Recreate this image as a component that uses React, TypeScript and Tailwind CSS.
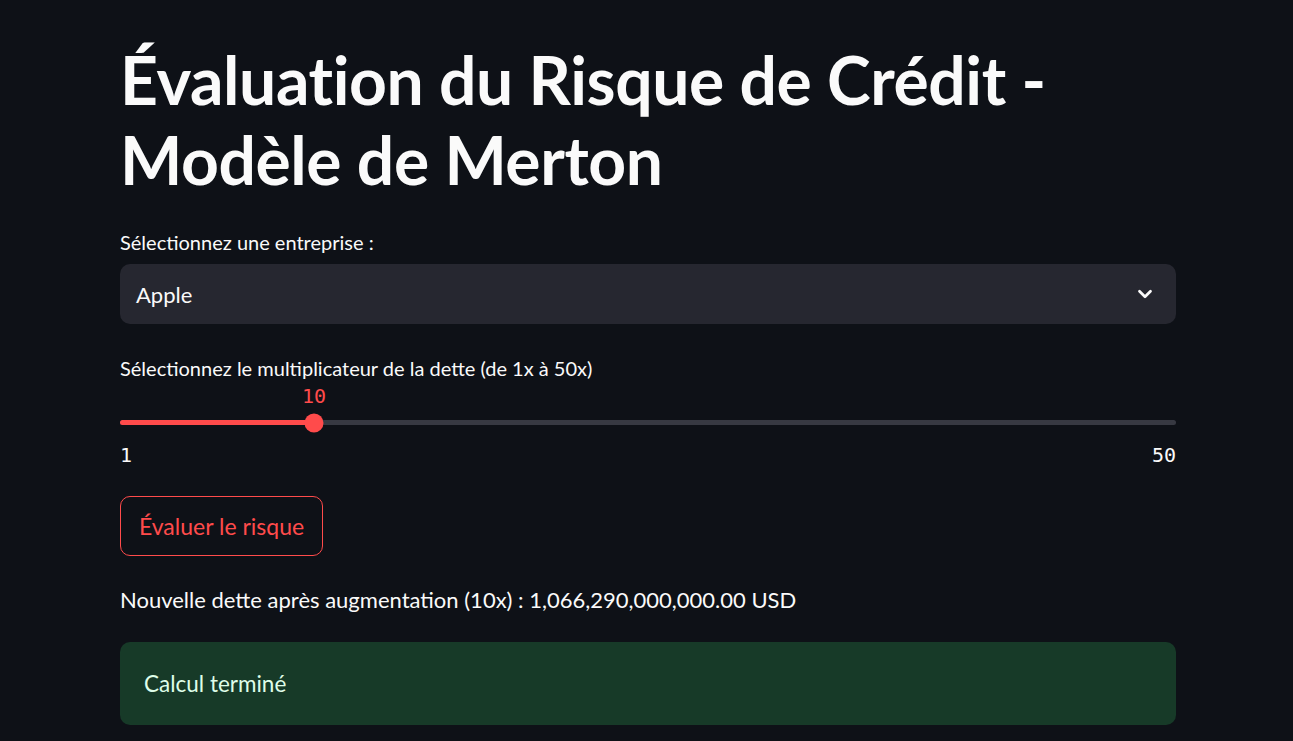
import { ChevronDown } from 'lucide-react';

const App = () => {
  const value = 10;
  const pct = ((value - 1) / (50 - 1)) * 100;

  return (
    <div className="min-h-[741px] bg-[#0e1117] text-[#fafafa] font-['Lato','Noto_Sans',sans-serif]">
      <main className="ml-[120px] w-[1056px] pt-[40px]">
        {/* Title */}
        <h1 className="text-[66px] font-bold leading-[80px] tracking-[-0.4px]">
          Évaluation du Risque de Crédit - Modèle de Merton
        </h1>

        {/* Company select */}
        <div className="mt-[28px]">
          <label className="block text-[20px] leading-[28px] mb-[8px]">Sélectionnez une entreprise :</label>
          <div className="flex h-[60px] items-center justify-between rounded-[10px] bg-[#262730] pl-[16px] pr-[20px]">
            <span className="text-[22px]">Apple</span>
            <ChevronDown className="h-[22px] w-[22px]" strokeWidth={3} />
          </div>
        </div>

        {/* Debt multiplier slider */}
        <div className="mt-[30px]">
          <label className="block text-[20px] leading-[28px]">
            Sélectionnez le multiplicateur de la dette (de 1x à 50x)
          </label>
          <div className="relative mt-[38px] h-[5px] rounded-full bg-[#373942]">
            <div className="h-full rounded-full bg-[#ff4b4b]" style={{ width: `${pct}%` }} />
            <div
              className="absolute top-1/2 h-[19px] w-[19px] -translate-x-1/2 -translate-y-1/2 rounded-full bg-[#ff4b4b]"
              style={{ left: `${pct}%` }}
            />
            <span
              className="absolute -top-[36px] -translate-x-1/2 font-['DejaVu_Sans_Mono',monospace] text-[20px] leading-[24px] text-[#ff4b4b]"
              style={{ left: `${pct}%` }}
            >
              {value}
            </span>
          </div>
          <div className="mt-[16px] flex justify-between font-['DejaVu_Sans_Mono',monospace] text-[20px] leading-[28px]">
            <span>1</span>
            <span>50</span>
          </div>
        </div>

        {/* Evaluate button */}
        <button className="mt-[27px] flex h-[60px] items-center rounded-[10px] border border-[#ff4b4b] bg-[#0e1117] px-[18px] text-[23px] text-[#ff4b4b]">
          Évaluer le risque
        </button>

        <p className="mt-[30px] text-[22px] leading-[28px]">
          Nouvelle dette après augmentation (10x) : 1,066,290,000,000.00 USD
        </p>

        <div className="mt-[28px] flex h-[83px] items-center rounded-[10px] bg-[#173a28] px-[24px] text-[22.5px] text-[#dffde9]">
          Calcul terminé
        </div>
      </main>
    </div>
  );
};

export default App;
